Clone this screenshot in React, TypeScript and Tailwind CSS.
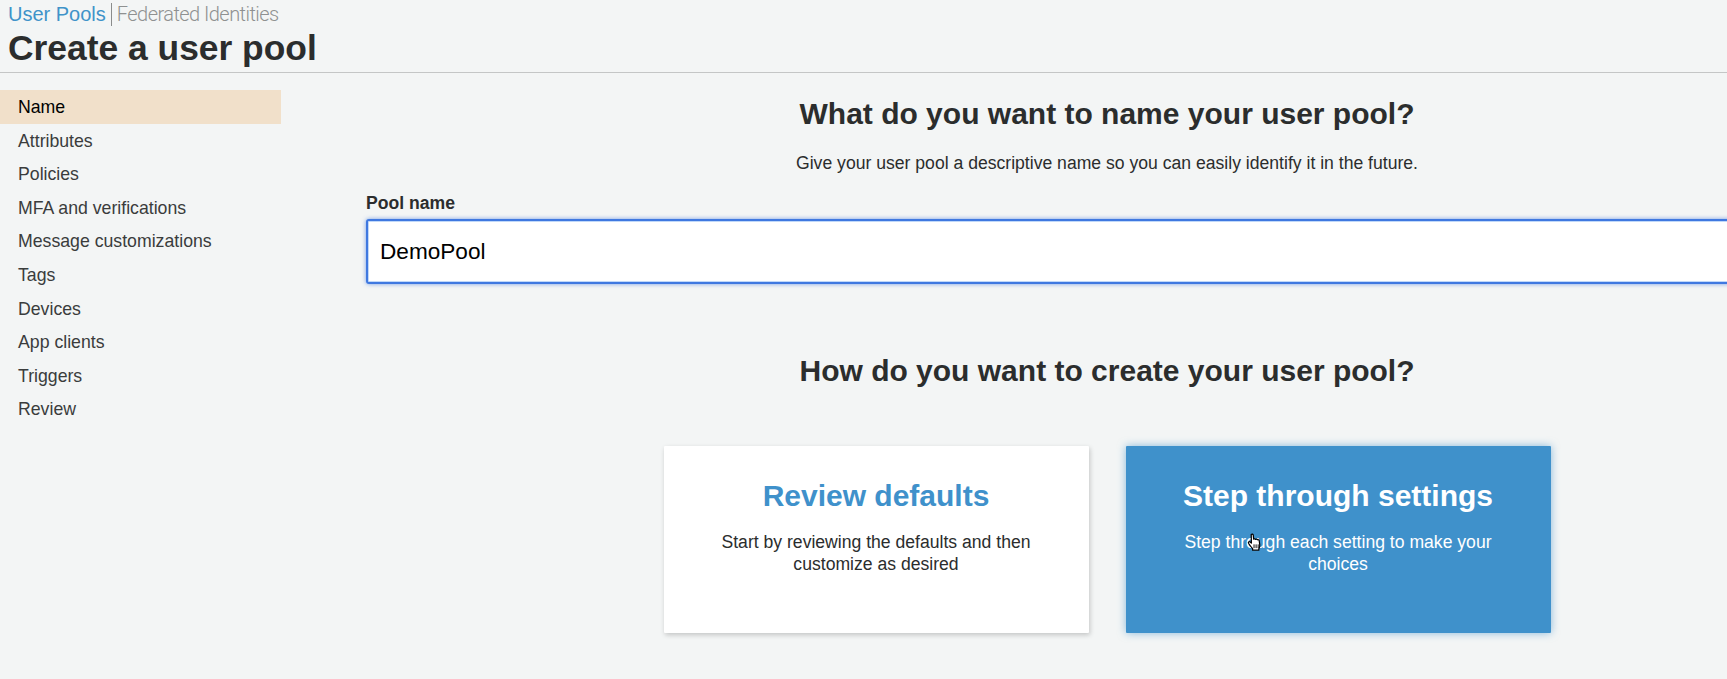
import React from "react";

const steps = [
  "Name",
  "Attributes",
  "Policies",
  "MFA and verifications",
  "Message customizations",
  "Tags",
  "Devices",
  "App clients",
  "Triggers",
  "Review",
];

function HandCursor() {
  return (
    <svg
      viewBox="0 0 16 20"
      className="absolute left-[121px] top-[87px] w-[15px] h-[19px]"
    >
      <path
        d="M4.5 1.5c.8-.8 2-.4 2.2.7l.4 4.2c.6-.5 1.6-.4 2 .3.6-.4 1.6-.3 2 .4.7-.3 1.6 0 1.9.8l.6 4.6c.2 1.6-.2 3-1 4.3v1.4H6v-1.6C4.6 15 3 13 1.6 10.8c-.6-1 .6-2.2 1.7-1.4l1.4 1.2z"
        fill="#fff"
        stroke="#000"
        strokeWidth="1.3"
        strokeLinejoin="round"
      />
      <path d="M7.5 12v4M9.7 12v4M11.9 12v4" stroke="#000" strokeWidth="1" />
    </svg>
  );
}

export default function App() {
  return (
    <div className="h-[679px] overflow-hidden bg-[#f3f5f5] font-['Liberation_Sans',Arial,sans-serif] text-[#2b2d2d]">
      {/* Header */}
      <header className="h-[73px] border-b border-[#c4c6c6] pl-[8px] pt-[3px]">
        <div className="flex items-center h-[23px] text-[20px] leading-[23px]">
          <a className="text-[#3f93c9]">User Pools</a>
          <span className="w-px h-[23px] bg-[#8a8c8c] mx-[5px]" />
          <a className="font-['Roboto',sans-serif] font-light tracking-[-0.55px] text-[#8f9191]">
            Federated Identities
          </a>
        </div>
        <h1 className="text-[35.4px] leading-[40px] font-bold mt-[2px]">
          Create a user pool
        </h1>
      </header>

      <div className="flex">
        {/* Steps */}
        <nav className="w-[281px] shrink-0 pt-[17px]">
          {steps.map((step, i) => (
            <div
              key={step}
              className={`h-[33.6px] pl-[18px] text-[17.7px] leading-[35.5px] ${
                i === 0 ? "bg-[#f1e0ca] text-black" : "text-[#3a3c3c]"
              }`}
            >
              {step}
            </div>
          ))}
        </nav>

        {/* Content */}
        <main className="w-[1482px] shrink-0 ml-[85px] pt-[22px]">
          <h2 className="text-center text-[30px] leading-[38px] font-bold">
            What do you want to name your user pool?
          </h2>
          <p className="text-center text-[17.6px] leading-[24px] mt-[18px]">
            Give your user pool a descriptive name so you can easily identify it
            in the future.
          </p>
          <label className="block text-[17.6px] leading-[22px] font-bold mt-[17px]">
            Pool name
          </label>
          <input
            readOnly
            value="DemoPool"
            className="block w-full h-[65px] mt-[5px] px-[12px] bg-white rounded-[3px] border-2 border-[#3f78e0] shadow-[0_0_4px_rgba(63,120,224,0.7),inset_0_0_0_1px_rgba(150,190,245,0.6)] text-[22.6px] text-black outline-none"
          />
          <h2 className="text-center text-[30px] leading-[38px] font-bold mt-[68px]">
            How do you want to create your user pool?
          </h2>
          <div className="flex justify-center gap-[37px] mt-[56px]">
            <button className="flex flex-col items-center w-[425px] h-[187px] bg-white rounded-[1px] shadow-[1px_2px_5px_rgba(0,0,0,0.2)] pt-[31px] px-[50px] text-center">
              <div className="text-[30px] leading-[38px] font-bold text-[#3f91cb]">
                Review defaults
              </div>
              <p className="text-[17.6px] leading-[22px] mt-[16px]">
                Start by reviewing the defaults and then customize as desired
              </p>
            </button>
            <button className="relative flex flex-col items-center w-[425px] h-[187px] bg-[#3f91cb] rounded-[1px] shadow-[0_0_8px_rgba(63,145,203,0.6)] pt-[31px] px-[50px] text-center text-white">
              <div className="text-[30px] leading-[38px] font-bold">
                Step through settings
              </div>
              <p className="text-[17.6px] leading-[22px] mt-[16px]">
                Step through each setting to make your choices
              </p>
              <HandCursor />
            </button>
          </div>
        </main>
      </div>
    </div>
  );
}
